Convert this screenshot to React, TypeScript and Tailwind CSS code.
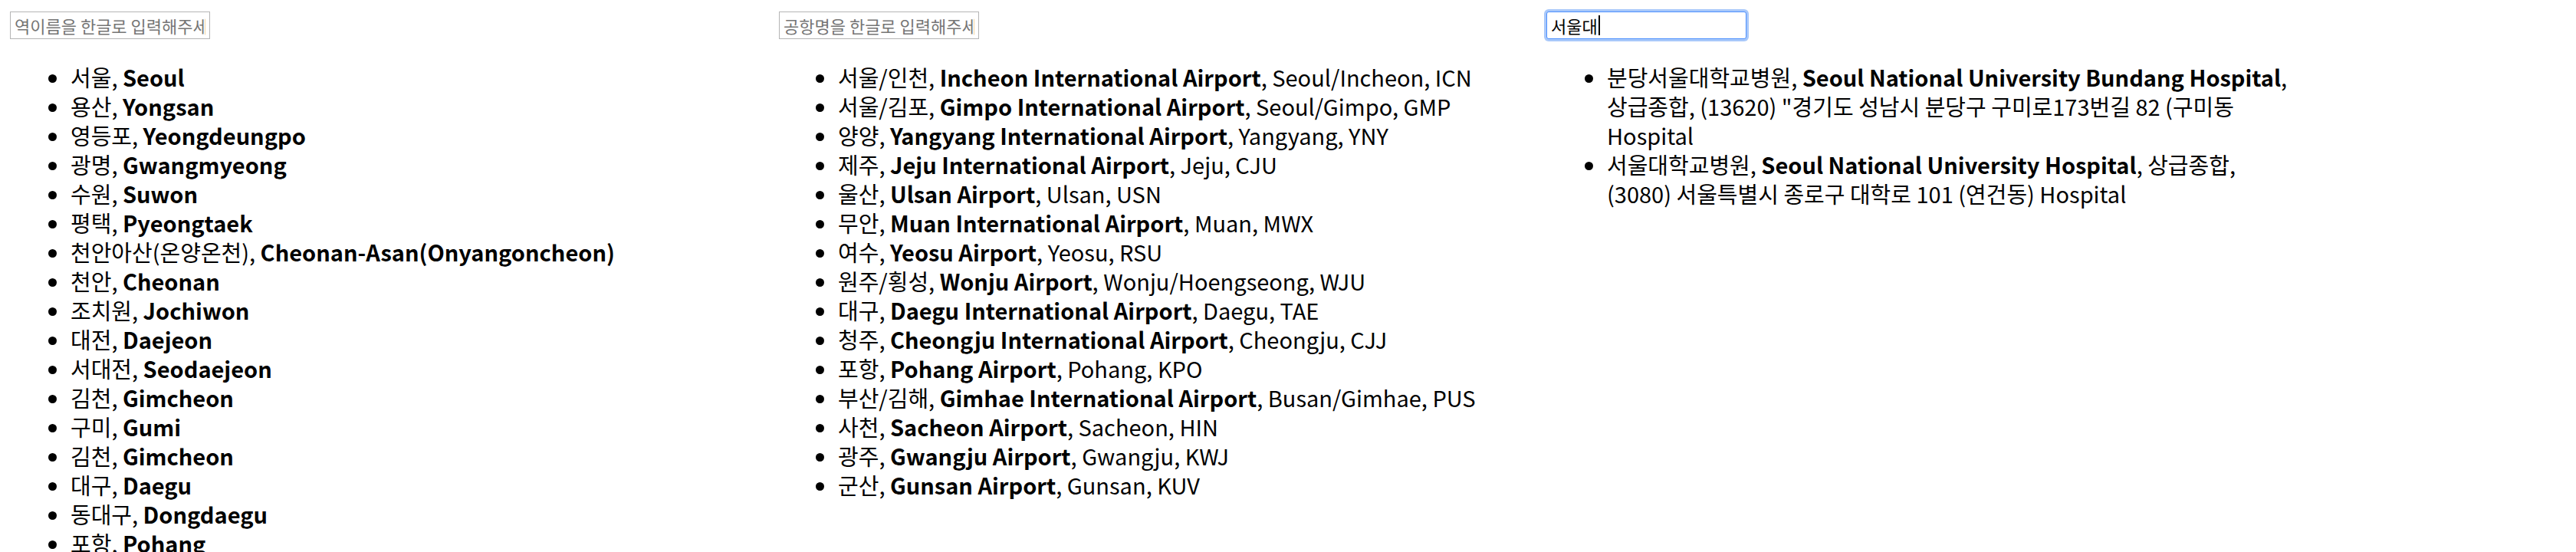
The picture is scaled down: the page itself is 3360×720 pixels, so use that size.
import React from 'react';

const stations = [
  ['서울', 'Seoul'],
  ['용산', 'Yongsan'],
  ['영등포', 'Yeongdeungpo'],
  ['광명', 'Gwangmyeong'],
  ['수원', 'Suwon'],
  ['평택', 'Pyeongtaek'],
  ['천안아산(온양온천)', 'Cheonan-Asan(Onyangoncheon)'],
  ['천안', 'Cheonan'],
  ['조치원', 'Jochiwon'],
  ['대전', 'Daejeon'],
  ['서대전', 'Seodaejeon'],
  ['김천', 'Gimcheon'],
  ['구미', 'Gumi'],
  ['김천', 'Gimcheon'],
  ['대구', 'Daegu'],
  ['동대구', 'Dongdaegu'],
  ['포항', 'Pohang'],
];

const airports = [
  ['서울/인천', 'Incheon International Airport', 'Seoul/Incheon, ICN'],
  ['서울/김포', 'Gimpo International Airport', 'Seoul/Gimpo, GMP'],
  ['양양', 'Yangyang International Airport', 'Yangyang, YNY'],
  ['제주', 'Jeju International Airport', 'Jeju, CJU'],
  ['울산', 'Ulsan Airport', 'Ulsan, USN'],
  ['무안', 'Muan International Airport', 'Muan, MWX'],
  ['여수', 'Yeosu Airport', 'Yeosu, RSU'],
  ['원주/횡성', 'Wonju Airport', 'Wonju/Hoengseong, WJU'],
  ['대구', 'Daegu International Airport', 'Daegu, TAE'],
  ['청주', 'Cheongju International Airport', 'Cheongju, CJJ'],
  ['포항', 'Pohang Airport', 'Pohang, KPO'],
  ['부산/김해', 'Gimhae International Airport', 'Busan/Gimhae, PUS'],
  ['사천', 'Sacheon Airport', 'Sacheon, HIN'],
  ['광주', 'Gwangju Airport', 'Gwangju, KWJ'],
  ['군산', 'Gunsan Airport', 'Gunsan, KUV'],
];

const hospitals = [
  ['분당서울대학교병원', 'Seoul National University Bundang Hospital', '상급종합, (13620) "경기도 성남시 분당구 구미로173번길 82 (구미동 Hospital'],
  ['서울대학교병원', 'Seoul National University Hospital', '상급종합, (3080) 서울특별시 종로구 대학로 101 (연건동) Hospital'],
];

function SearchBox({ placeholder }: { placeholder: string }) {
  return (
    <input
      type="text"
      placeholder={placeholder}
      className="block h-[36px] w-[261px] border border-[#b5b5b5] bg-white px-[5px] text-[22px] text-black outline-none placeholder:text-[#757575]"
    />
  );
}

export default function App() {
  return (
    <div className="grid h-[720px] grid-cols-[1003px_1001px_1fr] overflow-hidden bg-white pl-[13px] font-['Noto_Sans_CJK_KR',sans-serif] text-black">
      <div className="pt-[15px]">
        <SearchBox placeholder="역이름을 한글로 입력해주세요" />
        <ul className="mt-[30px] list-disc pl-[79px] text-[29px] leading-[38px]">
          {stations.map(([ko, en], i) => (
            <li key={i}>
              {ko}, <b className="font-bold">{en}</b>
            </li>
          ))}
        </ul>
      </div>

      <div className="pt-[15px]">
        <SearchBox placeholder="공항명을 한글로 입력해주세요" />
        <ul className="mt-[30px] list-disc pl-[77px] text-[29px] leading-[38px]">
          {airports.map(([ko, en, rest], i) => (
            <li key={i}>
              {ko}, <b className="font-bold">{en}</b>, {rest}
            </li>
          ))}
        </ul>
      </div>

      <div className="pt-[15px]">
        <div className="flex h-[36px] w-[261px] items-center rounded-[3px] border border-[#4d90fe] bg-white px-[5px] text-[22px] shadow-[0_0_0_3px_#a8c8fa]">
          <span>서울대</span>
          <span className="ml-[1px] h-[26px] w-[2px] bg-black" />
        </div>
        <ul className="mt-[30px] w-[979px] list-disc break-keep pl-[79px] text-[29px] leading-[38px]">
          {hospitals.map(([ko, en, rest], i) => (
            <li key={i}>
              {ko}, <b className="font-bold">{en}</b>, {rest}
            </li>
          ))}
        </ul>
      </div>
    </div>
  );
}
